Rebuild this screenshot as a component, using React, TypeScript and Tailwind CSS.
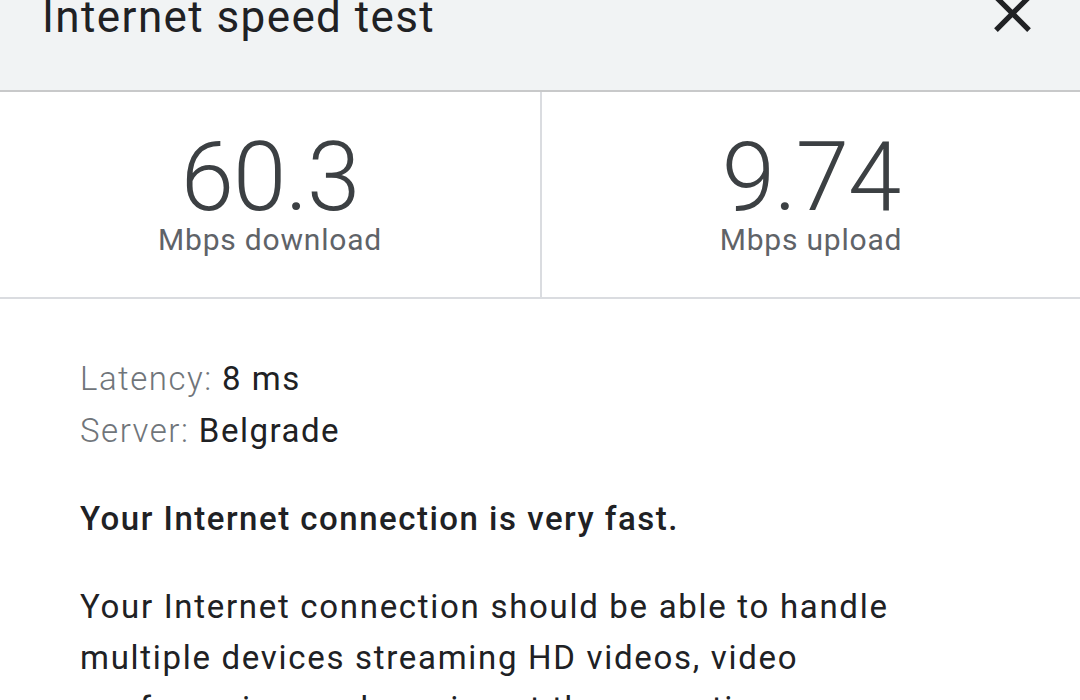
export default function App() {
  const stats = [
    { value: '60.3', label: 'Mbps download' },
    { value: '9.74', label: 'Mbps upload' },
  ];

  return (
    <div className="w-[1080px] h-[700px] overflow-hidden bg-white font-['Roboto',sans-serif]">
      <header className="h-[92px] bg-[#f1f3f4] border-b-2 border-[#c8c9ca] flex items-start justify-between pl-[42px] pr-[36px]">
        <h1 className="-mt-[5px] text-[44px] leading-[44px] tracking-[1.4px] font-normal text-[#202124]">
          Internet speed test
        </h1>
        <svg viewBox="0 0 24 24" className="w-[63px] h-[63px] -mt-[18px] fill-[#202124]">
          <path d="M19 6.41L17.59 5 12 10.59 6.41 5 5 6.41 10.59 12 5 17.59 6.41 19 12 13.41 17.59 19 19 17.59 13.41 12z" />
        </svg>
      </header>

      <section className="grid grid-cols-2 h-[207px] border-b-2 border-[#dadce0]">
        {stats.map((s, i) => (
          <div
            key={s.label}
            className={`flex flex-col items-center pt-[39px] ${i === 1 ? 'border-l-2 border-[#dadce0]' : ''}`}
          >
            <div className="text-[96px] leading-[92px] tracking-[-1px] font-light text-[#3c4043]">{s.value}</div>
            <div className="text-[30px] leading-[34px] tracking-[0.8px] text-[#5f6368]">{s.label}</div>
          </div>
        ))}
      </section>

      <section className="pl-[80px] pt-[54px] text-[33px]">
        <div className="leading-[52px] tracking-[1.5px]">
          <div>
            <span className="font-light text-[#70757a]">Latency: </span>
            <span className="text-[#202124]">8 ms</span>
          </div>
          <div>
            <span className="font-light text-[#70757a]">Server: </span>
            <span className="text-[#202124]">Belgrade</span>
          </div>
        </div>
        <p className="mt-[36px] leading-[52px] tracking-[1.5px] font-medium text-[#202124]">
          Your Internet connection is very fast.
        </p>
        <p className="mt-[36px] max-w-[900px] leading-[51px] tracking-[1.7px] text-[#202124]">
          Your Internet connection should be able to handle multiple devices streaming HD videos, video
          conferencing, and gaming at the same time.
        </p>
      </section>
    </div>
  );
}
